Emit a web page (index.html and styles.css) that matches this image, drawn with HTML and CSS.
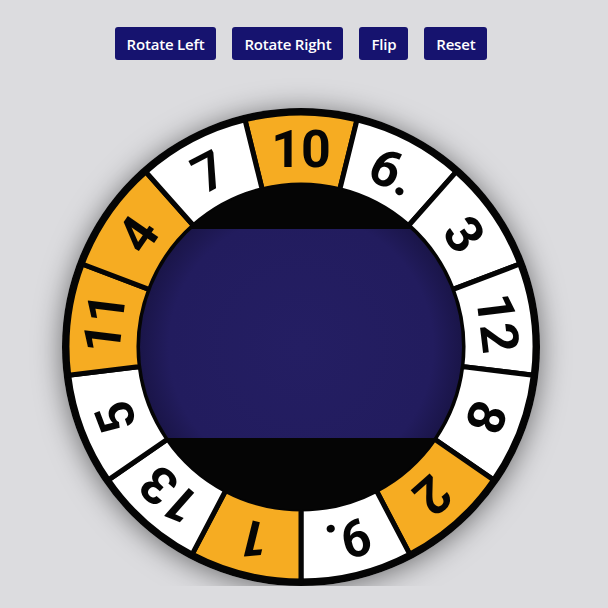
FILE: index.html
```html
<!DOCTYPE html>
<html>
<head>
<meta charset="utf-8">
<link rel="stylesheet" href="styles.css">
</head>
<body>
<div class="app">
  <div class="controls">
    <button class="btn">Rotate Left</button>
    <button class="btn">Rotate Right</button>
    <button class="btn">Flip</button>
    <button class="btn">Reset</button>
  </div>
  <div class="dial">
    <svg class="dial-svg" viewBox="-239 -239 478 478" width="478" height="478">
      <defs>
        <clipPath id="win"><circle r="161"/></clipPath>
        <radialGradient id="vig" cx="0" cy="0" r="161" gradientUnits="userSpaceOnUse">
          <stop offset="0" stop-color="#241e63"/>
          <stop offset="0.82" stop-color="#221c5e"/>
          <stop offset="1" stop-color="#1a1549"/>
        </radialGradient>
      </defs>
      <circle r="239" fill="#050505"/>
      <g id="segs"></g>
      <circle r="163" fill="#050505"/>
      <rect x="-170" y="-118" width="340" height="209" fill="url(#vig)" clip-path="url(#win)"/>
      <g class="labels" id="labels"></g>
    </svg>
  </div>
</div>
<script src="app.js"></script>
</body>
</html>
```
FILE: app.js
```js
(function () {
  var labels = ["10", "6.", "3", "12", "8", "2", "9.", "1", "13", "5", "11", "4", "7"];
  var orange = { 0: 1, 5: 1, 7: 1, 10: 1, 11: 1 };
  var n = 13, step = 360 / n;
  var rIn = 162, rOut = 234;
  var NS = "http://www.w3.org/2000/svg";
  var segs = document.getElementById("segs");
  var lab = document.getElementById("labels");
  function pt(r, deg) {
    var a = (deg - 90) * Math.PI / 180;
    return (r * Math.cos(a)).toFixed(2) + " " + (r * Math.sin(a)).toFixed(2);
  }
  for (var k = 0; k < n; k++) {
    var c = k * step, a0 = c - step / 2, a1 = c + step / 2;
    var d = "M " + pt(rOut, a0) + " A " + rOut + " " + rOut + " 0 0 1 " + pt(rOut, a1) +
      " L " + pt(rIn, a1) + " A " + rIn + " " + rIn + " 0 0 0 " + pt(rIn, a0) + " Z";
    var p = document.createElementNS(NS, "path");
    p.setAttribute("d", d);
    p.setAttribute("class", orange[k] ? "seg seg-orange" : "seg seg-white");
    segs.appendChild(p);
    var t = document.createElementNS(NS, "text");
    t.setAttribute("x", "0");
    t.setAttribute("y", "-180");
    t.setAttribute("transform", "rotate(" + c.toFixed(3) + ")");
    t.setAttribute("class", "num");
    t.textContent = labels[k];
    lab.appendChild(t);
  }
})();
```
FILE: styles.css
```css
html, body {
  margin: 0;
  padding: 0;
  background: #dcdcdf;
}
.app {
  width: 602px;
  display: flex;
  flex-direction: column;
  align-items: center;
}
.controls {
  display: flex;
  gap: 16px;
  margin-top: 27px;
}
.btn {
  height: 33px;
  padding: 0 12px;
  border: none;
  border-radius: 3px;
  background: #16136f;
  color: #ffffff;
  font-family: "Open Sans", "Noto Sans", sans-serif;
  font-weight: 600;
  font-size: 15px;
  letter-spacing: -0.2px;
}
.dial {
  margin-top: 48px;
  width: 478px;
  height: 478px;
  border-radius: 50%;
  box-shadow: 0 3px 28px rgba(0, 0, 0, 0.5);
}
.dial-svg {
  display: block;
}
.seg {
  stroke: #050505;
  stroke-width: 5;
  stroke-linejoin: miter;
}
.seg-orange { fill: #f6ac22; }
.seg-white { fill: #ffffff; }
.labels {
  font-family: Roboto, "Liberation Sans", sans-serif;
  font-weight: 700;
  font-size: 52px;
}
.num {
  fill: #050505;
  text-anchor: middle;
}
```
